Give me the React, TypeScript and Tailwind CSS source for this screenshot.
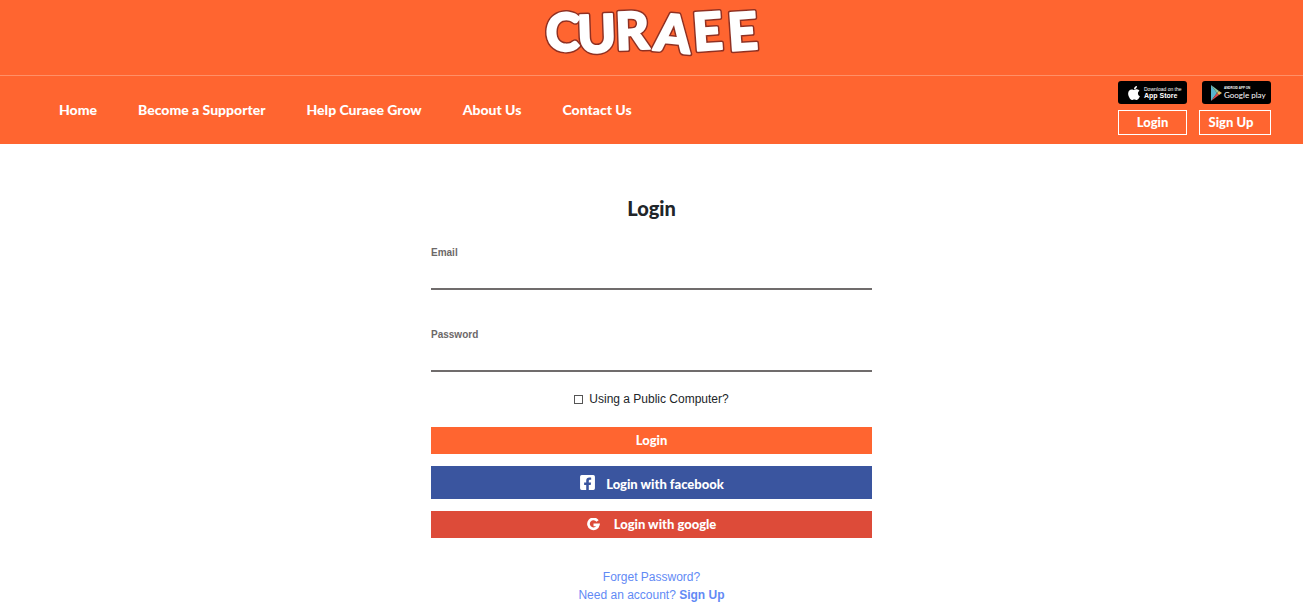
import React from "react";
import { FaApple, FaFacebookSquare } from "react-icons/fa";

const display = "font-['Lato','Open_Sans',sans-serif] font-black";

const links = ["Home", "Become a Supporter", "Help Curaee Grow", "About Us", "Contact Us"];

const letters = {
  x: "5 38 76 113 154 189",
  y: "50 53 50 50 51 51",
  rotate: "2 -2 -2 6 -4 -4",
  strokeLinejoin: "round" as const,
  className: "font-['Lato',sans-serif] text-[52px] font-black",
};

function Logo() {
  return (
    <svg viewBox="0 0 224 68" className="h-[68px] w-56" role="img" aria-label="Curaee">
      <text {...letters} fill="#8f3022" stroke="#8f3022" strokeWidth="5" aria-hidden="true">
        CURAEE
      </text>
      <text {...letters} fill="#ffffff" stroke="#ffffff" strokeWidth="2">
        CURAEE
      </text>
    </svg>
  );
}

function AppStoreBadge() {
  return (
    <a href="#app-store" aria-label="Download on the App Store" className="flex h-[23px] w-[69px] items-center gap-[2px] rounded-[3px] bg-black pl-2 text-white">
      <FaApple className="size-4 shrink-0" />
      <span className="flex flex-col whitespace-nowrap font-['Liberation_Sans',sans-serif]">
        <span className="text-[5px] leading-[6px]">Download on the</span>
        <span className="text-[7px] font-bold leading-[8px]">App Store</span>
      </span>
    </a>
  );
}

function GooglePlayBadge() {
  return (
    <a href="#google-play" aria-label="Android app on Google play" className="flex h-[23px] w-[69px] items-center gap-[2px] rounded-[3px] bg-black pl-2 text-white">
      <svg viewBox="0 0 12 16" className="h-4 w-3 shrink-0">
        <path d="M1 0v16l6-8z" fill="#58b5cf" />
        <path d="M1 0l8 6-2 2z" fill="#8ac5a0" />
        <path d="M1 16l8-6-2-2z" fill="#d94b4b" />
        <path d="M9 6l3 2-3 2-2-2z" fill="#e7b75c" />
      </svg>
      <span className="flex flex-col whitespace-nowrap">
        <span className="font-['Liberation_Sans',sans-serif] text-[3px] font-bold leading-[4px]">ANDROID APP ON</span>
        <span className="font-['Lato',sans-serif] text-[8px] leading-[10px]">Google play</span>
      </span>
    </a>
  );
}

function Field({ id, label, type }: { id: string; label: string; type: string }) {
  return (
    <div className="flex flex-col">
      <label htmlFor={id} className="text-[10px] font-bold leading-4 text-[#6c6868]">{label}</label>
      <input id={id} type={type} className="h-[29px] w-full border-b-2 border-[#706c6c] bg-transparent text-sm outline-none" />
    </div>
  );
}

export default function App() {
  return (
    <div className="min-h-screen bg-white font-['Liberation_Sans',Arial,sans-serif]">
      <header className="bg-[#ff6530] text-white">
        <div className="flex justify-center border-b border-[#ff9068] pb-[7px]">
          <a href="#home"><Logo /></a>
        </div>
        <div className="flex items-center justify-between pb-[9px] pl-[59px] pr-8 pt-[5px]">
          <nav className={`flex gap-[41px] whitespace-nowrap pt-1 text-sm ${display}`}>
            {links.map((l) => (
              <a key={l} href="#nav">{l}</a>
            ))}
          </nav>
          <div className="flex flex-col gap-[6px]">
            <div className="flex justify-between">
              <AppStoreBadge />
              <GooglePlayBadge />
            </div>
            <div className={`flex gap-3 text-[13px] leading-[23px] ${display}`}>
              <button type="button" className="w-[69px] border border-white">Login</button>
              <button type="button" className="w-[72px] border border-white pr-2">Sign Up</button>
            </div>
          </div>
        </div>
      </header>

      <main className="mx-auto w-full max-w-[441px] pt-[50px]">
        <h1 className={`text-center text-xl leading-7 text-[#212529] ${display}`}>Login</h1>
        <form className="flex flex-col pt-[23px]" onSubmit={(e) => e.preventDefault()}>
          <div className="flex flex-col gap-[37px]">
            <Field id="email" label="Email" type="email" />
            <Field id="password" label="Password" type="password" />
          </div>
          <label className="mt-[18px] flex items-center justify-center gap-[6px] text-xs leading-[18px] text-[#212529]">
            <input type="checkbox" className="size-[9px] appearance-none border border-[#555555] bg-white checked:bg-[#555555]" />
            Using a Public Computer?
          </label>
          <div className={`mt-[19px] flex flex-col gap-3 text-[13px] leading-[27px] text-white ${display}`}>
            <button type="submit" className="h-[27px] bg-[#ff6530]">Login</button>
            <button type="button" className="flex h-[33px] items-center justify-center gap-[10px] bg-[#3a559f]">
              <FaFacebookSquare className="size-[17px]" />
              <span className="pt-1">Login with facebook</span>
            </button>
            <button type="button" className="flex h-[27px] items-center justify-center gap-[14px] bg-[#dd4b39]">
              <svg viewBox="0 0 24 24" className="size-[13px]" fill="none" stroke="currentColor" strokeWidth="5">
                <path d="M19.5 5.5A9.2 9.2 0 1 0 21 12.5H12" />
              </svg>
              <span>Login with google</span>
            </button>
          </div>
        </form>
        <div className="flex flex-col items-center pt-[30px] text-xs leading-[18px] text-[#628af5]">
          <a href="#forgot">Forget Password?</a>
          <a href="#signup">Need an account? <b>Sign Up</b></a>
        </div>
      </main>
    </div>
  );
}
